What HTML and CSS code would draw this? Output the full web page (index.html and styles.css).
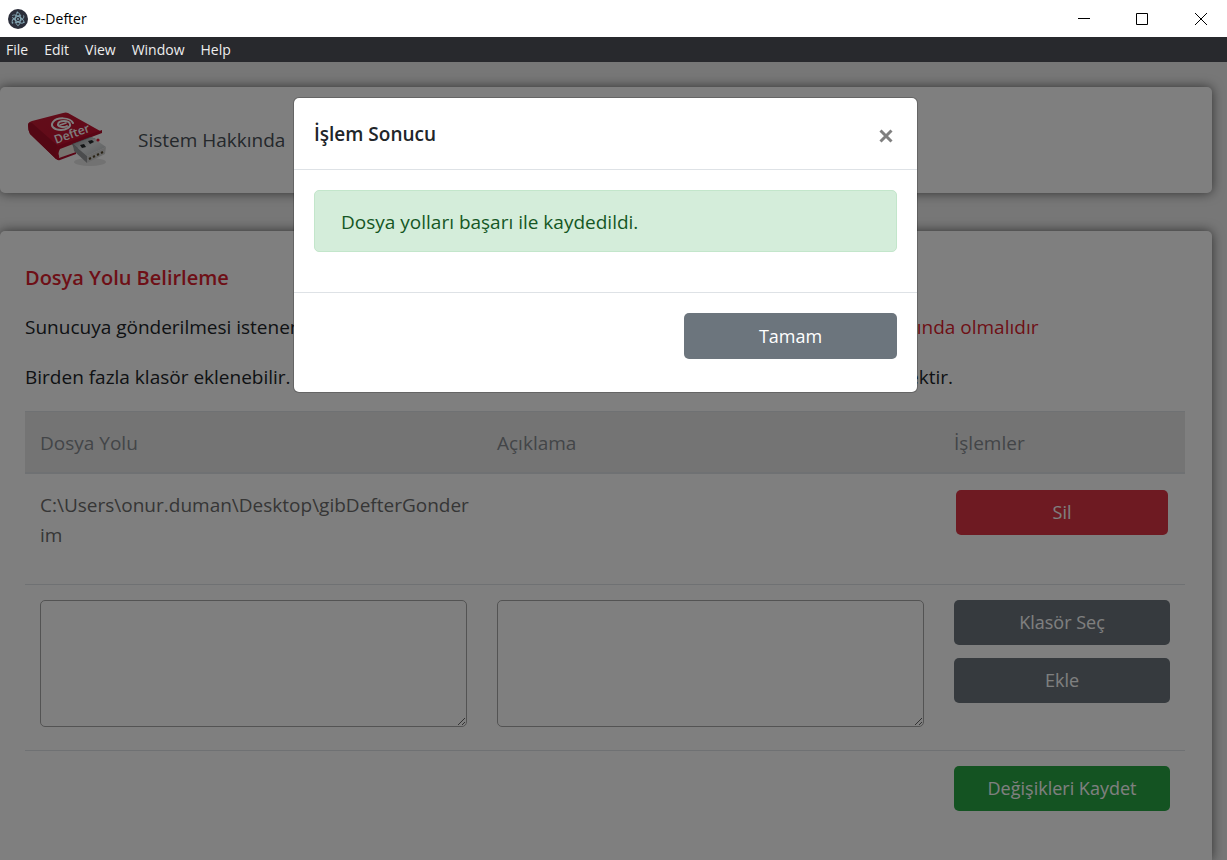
FILE: index.html
```
<!DOCTYPE html>
<html lang="tr">
<head>
    <meta charset="UTF-8">
    <meta name="viewport" content="width=device-width, initial-scale=1.0">
    <title>e-Defter</title>
    <link rel="stylesheet" href="styles.css">
</head>
<body>
    <header class="title-bar">
        <svg class="app-icon" viewBox="0 0 20 20" aria-hidden="true">
            <circle cx="10" cy="10" r="10" fill="#2b2e3a"/>
            <g fill="none" stroke="#86a9b6" stroke-width="0.9" stroke-linecap="round">
                <ellipse cx="10" cy="10" rx="6.6" ry="2.6" transform="rotate(30 10 10)" stroke-dasharray="13 2.5"/>
                <ellipse cx="10" cy="10" rx="6.6" ry="2.6" transform="rotate(-30 10 10)" stroke-dasharray="12 3"/>
                <ellipse cx="10" cy="10" rx="6.6" ry="2.6" transform="rotate(90 10 10)" stroke-dasharray="14 2"/>
            </g>
            <g fill="#86a9b6">
                <circle cx="10" cy="10" r="0.9"/>
                <circle cx="9.4" cy="3.4" r="0.9"/>
                <circle cx="4.5" cy="13.8" r="0.9"/>
                <circle cx="15.8" cy="13.2" r="0.9"/>
            </g>
        </svg>
        <span class="app-name">e-Defter</span>
        <div class="window-buttons">
            <button type="button" aria-label="Minimize"><svg viewBox="0 0 12 12"><path d="M0 5.5h12"/></svg></button>
            <button type="button" aria-label="Maximize"><svg viewBox="0 0 12 12"><path d="M.5.5h11v11H.5z"/></svg></button>
            <button type="button" aria-label="Close"><svg viewBox="0 0 12 12"><path d="M0 0l12 12M12 0L0 12"/></svg></button>
        </div>
    </header>

    <nav class="menu-bar">
        <button type="button">File</button>
        <button type="button">Edit</button>
        <button type="button">View</button>
        <button type="button">Window</button>
        <button type="button">Help</button>
    </nav>

    <div class="content">
        <div class="card navbar">
            <svg class="logo" viewBox="0 0 86 56" aria-hidden="true">
                <defs>
                    <linearGradient id="cover" x1="0" y1="0" x2="1" y2="1">
                        <stop offset="0" stop-color="#c31c34"/>
                        <stop offset="1" stop-color="#c90d30"/>
                    </linearGradient>
                    <linearGradient id="metal" x1="0" y1="0" x2="1" y2="1">
                        <stop offset="0" stop-color="#8d9194"/>
                        <stop offset="0.5" stop-color="#dfe2e3"/>
                        <stop offset="1" stop-color="#b5b9bb"/>
                    </linearGradient>
                </defs>
                <ellipse cx="64" cy="50" rx="16" ry="4" fill="#e4e4e4"/>
                <!-- kitap -->
                <path d="M2 13Q2 10 6 9L37 1q3-1 5 0L76 20 35 35l-2 12q-1 1-3 0L4 22Q2 18 2 13z" fill="url(#cover)"/>
                <path d="M33 36l15-6 3 9-17 7q-3-6-1-10z" fill="#eee6dc"/>
                <path d="M2 13q0-3 4-2l26 23q-3 6 0 13l-2 0L4 22Q2 18 2 13z" fill="#a80f29"/>
                <path d="M31 34l45-16v3L34 37q-3 5-1 9l17-6v2L34 48q-3 1-4-2-1-7 1-12z" fill="#b40d2b"/>
                <!-- e logosu -->
                <g fill="none" stroke="#fff" stroke-width="2" stroke-linecap="round">
                    <path d="M41 14c-3 2-10 1-9-2 1-4 11-4 12 0 1 3-4 6-9 6-7 0-11-4-8-8 4-5 17-5 20 1"/>
                    <path d="M34 13l6-2" stroke-width="1.6"/>
                </g>
                <text class="logo-text" x="30" y="32" transform="rotate(-20 30 32)">Defter</text>
                <!-- usb -->
                <path d="M46 32l18-7 6 2-21 11z" fill="#777b7e"/>
                <path d="M47 32l19-7 14 10-19 9z" fill="url(#metal)"/>
                <path d="M47 32l14 12v7L48 39z" fill="#96999b"/>
                <path d="M61 44l19-9-1 7-18 9z" fill="#d2d3d2"/>
                <path d="M54 33l4-1 2 3-4 1zM62 29l4-1 2 2-4 2z" fill="#25282b"/>
                <path d="M63 47l2-1M67 45l2-1M71 43l2-1M75 41l2-1" stroke="#55482c" stroke-width="2"/>
                <circle cx="72" cy="28" r="1.6" fill="#e3122e"/>
            </svg>
            <a class="nav-link" href="#">Sistem Hakkında</a>
        </div>

        <main class="card panel">
            <h1 class="panel-title">Dosya Yolu Belirleme</h1>
            <p>Sunucuya gönderilmesi istenen belge dosyalarının yolu seçilmelidir. <span class="text-danger">Dosyalar bu klasörün mutlaka altında olmalıdır</span></p>
            <p>Birden fazla klasör eklenebilir. Eklenen tüm klasörlerdeki dosyalar sırayla sunucuya böyle gönderilecektir.</p>

            <table class="paths">
                <thead>
                    <tr>
                        <th>Dosya Yolu</th>
                        <th>Açıklama</th>
                        <th class="actions">İşlemler</th>
                    </tr>
                </thead>
                <tbody>
                    <tr class="path-row">
                        <td>C:\Users\onur.duman\Desktop\gibDefterGonderim</td>
                        <td></td>
                        <td class="delete-cell"><button type="button" class="btn btn-danger">Sil</button></td>
                    </tr>
                    <tr class="new-row">
                        <td><textarea aria-label="Dosya Yolu"></textarea></td>
                        <td><textarea aria-label="Açıklama"></textarea></td>
                        <td>
                            <div class="btn-stack">
                                <button type="button" class="btn btn-secondary">Klasör Seç</button>
                                <button type="button" class="btn btn-secondary">Ekle</button>
                            </div>
                        </td>
                    </tr>
                    <tr>
                        <td></td>
                        <td></td>
                        <td><button type="button" class="btn btn-success">Değişikleri Kaydet</button></td>
                    </tr>
                </tbody>
            </table>
        </main>

        <div class="backdrop">
            <div class="modal" role="dialog" aria-modal="true" aria-labelledby="modalTitle">
                <div class="modal-header">
                    <h2 id="modalTitle">İşlem Sonucu</h2>
                    <button type="button" class="close" aria-label="Kapat">
                        <svg viewBox="0 0 14 14"><path d="M1.5 1.5l11 11M12.5 1.5l-11 11"/></svg>
                    </button>
                </div>
                <div class="modal-body">
                    <div class="alert">Dosya yolları başarı ile kaydedildi.</div>
                </div>
                <div class="modal-footer">
                    <button type="button" class="btn btn-secondary">Tamam</button>
                </div>
            </div>
        </div>
    </div>
</body>
</html>
```
FILE: styles.css
```
* {
    box-sizing: border-box;
}
body {
    margin: 0;
    height: 100vh;
    display: flex;
    flex-direction: column;
    overflow: hidden;
    font-family: 'Segoe UI', 'Open Sans', 'Noto Sans', sans-serif;
    font-size: 19px;
    line-height: 30px;
    color: #212529;
    background-color: #eee;
}
button {
    font-family: inherit;
    border: none;
    cursor: pointer;
}

/* pencere */
.title-bar {
    display: flex;
    align-items: center;
    flex: none;
    height: 37px;
    padding-left: 8px;
    background-color: #fff;
    color: #000;
    font-size: 14px;
}
.app-icon {
    width: 20px;
    height: 20px;
    margin-right: 5px;
}
.window-buttons {
    display: flex;
    margin-left: auto;
}
.window-buttons button {
    display: flex;
    align-items: center;
    justify-content: center;
    width: 58px;
    height: 36px;
    padding: 0;
    background: none;
}
.window-buttons button:last-child {
    width: 56px;
    padding-left: 4px;
}
.window-buttons svg {
    width: 12px;
    height: 12px;
    fill: none;
    stroke: #000;
}
.menu-bar {
    display: flex;
    flex: none;
    height: 25px;
    background-color: #28292d;
}
.menu-bar button {
    padding: 0 8px;
    background: none;
    color: #eee;
    font-size: 14px;
}
.menu-bar button:first-child {
    padding-left: 6px;
}

/* sayfa */
.content {
    position: relative;
    flex: 1;
    min-height: 0;
    display: flex;
    flex-direction: column;
    gap: 38px;
    padding: 25px 15px 0 0;
    overflow: hidden;
}
.card {
    background-color: #fff;
    border-radius: 5px;
    box-shadow: 0 0 12px rgba(0, 0, 0, 0.6);
}
.navbar {
    display: flex;
    align-items: center;
    flex: none;
    height: 106px;
    padding-left: 26px;
}
.logo {
    width: 86px;
    height: 56px;
}
.logo-text {
    font-size: 12px;
    font-weight: 600;
    fill: #fff;
}
.nav-link {
    margin-left: 26px;
    color: #495057;
    text-decoration: none;
}
.panel {
    flex: 1 0 auto;
    padding: 32px 27px 25px 25px;
    border-bottom-left-radius: 0;
    border-bottom-right-radius: 0;
}
.panel-title {
    margin: 0 0 19px;
    font-size: 20px;
    line-height: 30px;
    font-weight: 600;
    color: #dc1e2e;
}
.panel p {
    margin: 0 0 20px;
    white-space: nowrap;
}
.panel p + p {
    margin-bottom: 19px;
}
.text-danger {
    color: #dc1e2e;
}

/* tablo */
.paths {
    width: 100%;
    table-layout: fixed;
    border-collapse: separate;
    border-spacing: 0;
}
.paths th {
    padding: 16px 15px 14px;
    border-top: 1px solid #dee2e6;
    border-bottom: 2px solid #dee2e6;
    background-color: #e9e9e9;
    color: #868b90;
    font-weight: normal;
    text-align: left;
}
.paths .actions {
    width: 246px;
}
.paths td {
    padding: 15px;
    border-top: 1px solid #dee2e6;
    vertical-align: top;
    overflow-wrap: anywhere;
    color: #6c6c6c;
}
.paths .path-row td {
    height: 110px;
    padding-top: 16px;
    padding-right: 10px;
    border-top: none;
}
.paths .path-row .delete-cell {
    padding-left: 17px;
    padding-right: 17px;
}
.paths .new-row td {
    height: 166px;
}
textarea {
    display: block;
    width: 100%;
    height: 127px;
    border: 1px solid #a6a6a6;
    border-radius: 5px;
    font: inherit;
}
.btn {
    display: block;
    width: 100%;
    height: 45px;
    padding: 0 6px 1px;
    border-radius: 5px;
    color: #fff;
    font-size: 18px;
}
.btn-stack {
    display: grid;
    gap: 13px;
}
.btn-danger {
    background-color: #dc3545;
}
.btn-secondary {
    background-color: #6c757d;
}
.btn-success {
    background-color: #28a745;
}

/* modal */
.backdrop {
    position: absolute;
    inset: 0;
    display: flex;
    justify-content: center;
    align-items: flex-start;
    padding: 35px 16px 0 0;
    background-color: rgba(0, 0, 0, 0.5);
}
.modal {
    width: 625px;
    border: 1px solid rgba(0, 0, 0, 0.2);
    border-radius: 6px;
    background-color: #fff;
    background-clip: padding-box;
}
.modal-header {
    display: flex;
    justify-content: space-between;
    align-items: flex-start;
    padding: 21px 20px 20px;
    height: 72px;
    border-bottom: 1px solid #dee2e6;
}
.modal-header h2 {
    margin: 0;
    font-size: 19px;
    font-weight: 600;
}
.close {
    display: flex;
    padding: 10px 4px 0;
    background: none;
}
.close svg {
    width: 14px;
    height: 14px;
    fill: none;
    stroke: #808080;
    stroke-width: 3;
}
.modal-body {
    padding: 20px 20px 40px;
}
.alert {
    padding: 16px 26px 14px;
    border: 1px solid #c3e6cb;
    border-radius: 5px;
    background-color: #d4edda;
    color: #155724;
}
.modal-footer {
    display: flex;
    justify-content: flex-end;
    padding: 20px 20px 33px;
    border-top: 1px solid #dee2e6;
}
.modal-footer .btn {
    width: 213px;
    height: 46px;
}
```
